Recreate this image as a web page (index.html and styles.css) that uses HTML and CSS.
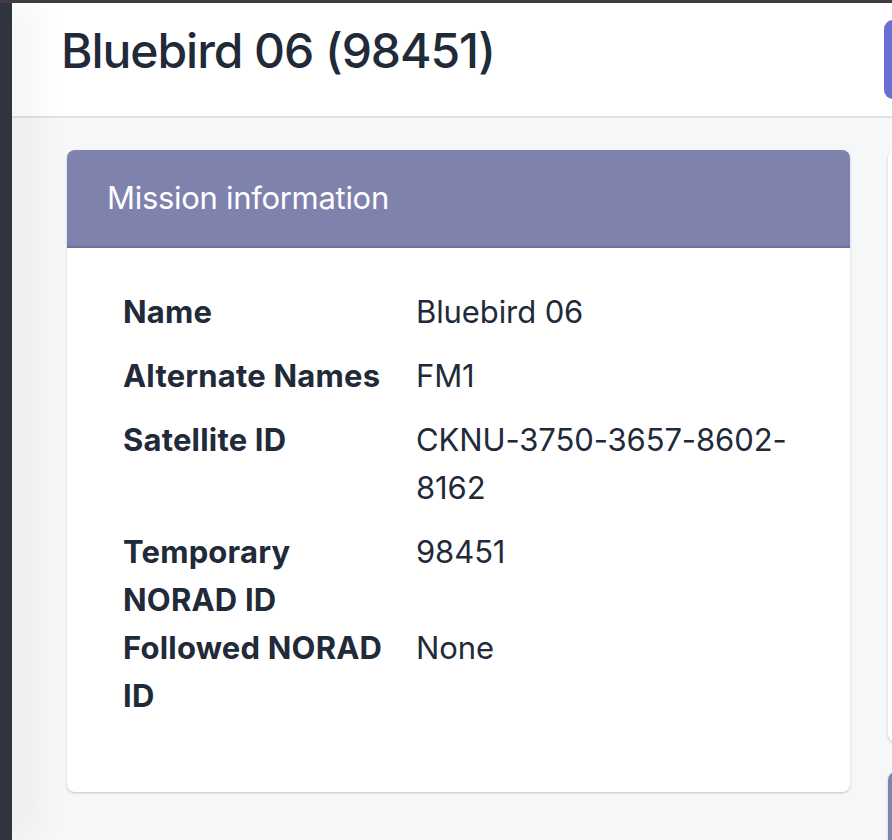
FILE: index.html
```html
<!DOCTYPE html>
<html lang="en">
<head>
<meta charset="utf-8">
<title>Bluebird 06 (98451)</title>
<link rel="stylesheet" href="styles.css">
</head>
<body>
<div class="topstrip"></div>
<div class="app">
  <aside class="sidebar"></aside>
  <div class="main">
    <header class="page-header">
      <h1 class="page-title">Bluebird 06 (98451)</h1>
      <button class="action-btn" type="button" aria-label="Action"></button>
    </header>
    <div class="content">
      <section class="card card-main">
        <div class="card-header">Mission information</div>
        <div class="card-body">
          <dl class="info-list">
            <div class="info-row">
              <dt>Name</dt>
              <dd>Bluebird 06</dd>
            </div>
            <div class="info-row">
              <dt>Alternate Names</dt>
              <dd>FM1</dd>
            </div>
            <div class="info-row">
              <dt>Satellite ID</dt>
              <dd>CKNU-3750-3657-8602-8162</dd>
            </div>
            <div class="info-row">
              <dt>Temporary NORAD ID</dt>
              <dd>98451</dd>
            </div>
            <div class="info-row">
              <dt>Followed NORAD ID</dt>
              <dd>None</dd>
            </div>
          </dl>
        </div>
      </section>
      <div class="side-col">
        <section class="card card-side"></section>
        <section class="card card-side2"><div class="card-header"></div></section>
      </div>
    </div>
  </div>
</div>
</body>
</html>
```

FILE: styles.css
```css
html, body {
  margin: 0;
  padding: 0;
}
body {
  background: #f6f7f9;
  font-family: Inter, "Noto Sans", "Liberation Sans", sans-serif;
  color: #212a39;
  overflow: hidden;
  height: 840px;
}
.topstrip {
  height: 3px;
  background: #433a45;
}
.app {
  display: flex;
  height: 837px;
}
.sidebar {
  width: 12px;
  flex: none;
  background: #30343c;
  position: relative;
  z-index: 2;
  box-shadow: 8px 0 44px rgba(0, 0, 0, 0.16);
}
.main {
  flex: 1;
  min-width: 0;
  display: flex;
  flex-direction: column;
  overflow: hidden;
}
.page-header {
  flex: none;
  background: #fff;
  height: 115px;
  box-sizing: border-box;
  border-bottom: 2px solid #dfe1e7;
  display: flex;
  align-items: flex-start;
  justify-content: space-between;
  padding: 16px 0 0 49px;
}
.page-title {
  margin: 0;
  font-size: 48px;
  font-weight: 500;
  line-height: 64px;
  letter-spacing: -1.05px;
  color: #212a39;
}
.action-btn {
  width: 80px;
  height: 79px;
  margin-top: 1px;
  margin-right: -72px;
  border: none;
  border-radius: 9px;
  background: #6a6fd5;
  flex: none;
}
.content {
  display: flex;
  gap: 38px;
  padding: 32px 0 0 55px;
  align-items: flex-start;
}
.card {
  background: #fff;
  border-radius: 8px;
  box-shadow: 0 1px 3px rgba(0, 0, 0, 0.16), 0 1px 2px rgba(0, 0, 0, 0.06);
  overflow: hidden;
}
.card-main {
  width: 783px;
  flex: none;
}
.card-header {
  background: #7e82ad;
  color: #fff;
  font-size: 31px;
  font-weight: 400;
  line-height: 48px;
  padding: 24px 40px;
  border-bottom: 2px solid #6e7299;
  letter-spacing: -0.3px;
}
.card-body {
  padding: 40px 40px 72px 56px;
}
.info-list {
  margin: 0;
}
.info-row {
  display: grid;
  grid-template-columns: 293px 1fr;
}
.info-row dt {
  font-weight: 700;
  font-size: 31px;
  line-height: 48px;
  letter-spacing: 0.2px;
  padding-right: 24px;
}
.info-row dd {
  margin: 0 0 16px 0;
  font-size: 31px;
  line-height: 48px;
  letter-spacing: -0.1px;
}
.side-col {
  display: flex;
  flex-direction: column;
  gap: 30px;
  width: 300px;
  flex: none;
}
.card-side {
  height: 592px;
}
.card-side2 {
  height: 200px;
}
.card-side2 .card-header {
  height: 96px;
  box-sizing: border-box;
}
```
